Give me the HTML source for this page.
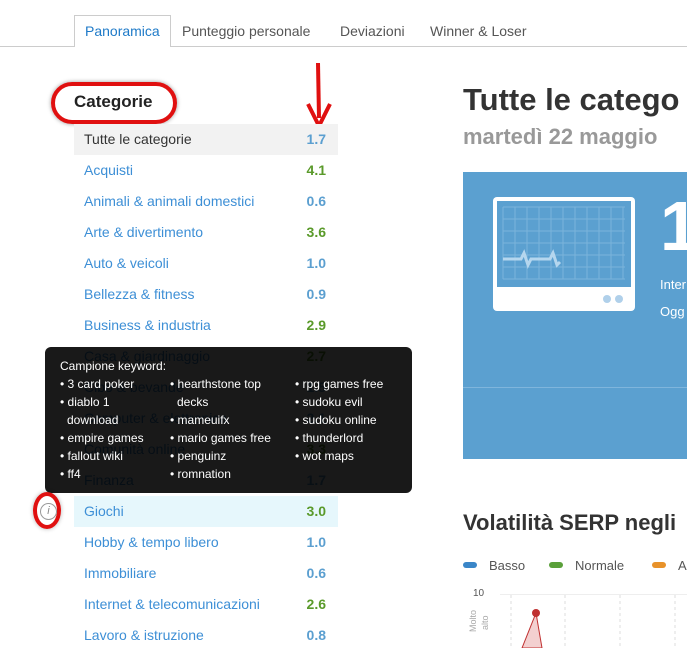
<!DOCTYPE html>
<html><head><meta charset="utf-8"><style>
*{margin:0;padding:0;box-sizing:border-box}
body{width:687px;height:648px;overflow:hidden;background:#fff;font-family:"Liberation Sans",sans-serif;position:relative;color:#333}
.a{position:absolute;white-space:nowrap}
.tab{font-size:14px;color:#555;top:23px}
.row{position:absolute;left:74px;width:264px;height:31px;font-size:14px;line-height:31px}
.row .l{position:absolute;left:10px;color:#3d8fd6}
.row .n{position:absolute;right:12px;font-weight:bold;color:#5b9fd0}
.row .g{color:#5a9a2a}
.tt{position:absolute;left:45px;top:347px;width:367px;height:146px;background:rgba(0,0,0,.9);border-radius:6px;color:#fff;font-size:12px}
.tt div{position:absolute;white-space:nowrap}
</style></head><body>
<div class="a" style="left:0;top:46px;width:687px;height:1px;background:#ccc"></div>
<div class="a" style="left:74px;top:15px;width:97px;height:32px;border:1px solid #ccc;border-bottom:none;background:#fff"></div>
<div class="a tab" style="left:85px;color:#1e7ac8">Panoramica</div>
<div class="a tab" style="left:182px">Punteggio personale</div>
<div class="a tab" style="left:340px">Deviazioni</div>
<div class="a tab" style="left:430px">Winner &amp; Loser</div>

<div class="a" style="left:74px;top:92px;font-size:17px;font-weight:bold;color:#222">Categorie</div>
<div class="a" style="left:51px;top:82px;width:126px;height:42px;border:4px solid #e01010;border-radius:22px;box-shadow:0 0 4px rgba(0,0,0,.4)"></div>
<svg class="a" style="left:304px;top:60px" width="30" height="72"><line x1="14" y1="3" x2="15" y2="58" stroke="#e01010" stroke-width="4"/><polyline points="4,44 15,66 26,44" fill="none" stroke="#e01010" stroke-width="4"/></svg>

<div class="row" style="top:124px;background:#f2f2f2"><span class="l" style="color:#333">Tutte le categorie</span><span class="n">1.7</span></div>
<div class="row" style="top:155px"><span class="l">Acquisti</span><span class="n g">4.1</span></div>
<div class="row" style="top:186px"><span class="l">Animali &amp; animali domestici</span><span class="n">0.6</span></div>
<div class="row" style="top:217px"><span class="l">Arte &amp; divertimento</span><span class="n g">3.6</span></div>
<div class="row" style="top:248px"><span class="l">Auto &amp; veicoli</span><span class="n">1.0</span></div>
<div class="row" style="top:279px"><span class="l">Bellezza &amp; fitness</span><span class="n">0.9</span></div>
<div class="row" style="top:310px"><span class="l">Business &amp; industria</span><span class="n g">2.9</span></div>
<div class="row" style="top:341px"><span class="l">Casa &amp; giardinaggio</span><span class="n g">2.7</span></div>
<div class="row" style="top:372px"><span class="l">Cibo &amp; bevande</span><span class="n">1.5</span></div>
<div class="row" style="top:403px"><span class="l">Computer &amp; elettronica</span><span class="n">2.1</span></div>
<div class="row" style="top:434px"><span class="l">Comunità online</span><span class="n g">3.3</span></div>
<div class="row" style="top:465px"><span class="l">Finanza</span><span class="n">1.7</span></div>
<div class="row" style="top:496px;background:#e6f7fc"><span class="l">Giochi</span><span class="n g">3.0</span></div>
<div class="row" style="top:527px"><span class="l">Hobby &amp; tempo libero</span><span class="n">1.0</span></div>
<div class="row" style="top:558px"><span class="l">Immobiliare</span><span class="n">0.6</span></div>
<div class="row" style="top:589px"><span class="l">Internet &amp; telecomunicazioni</span><span class="n g">2.6</span></div>
<div class="row" style="top:620px"><span class="l">Lavoro &amp; istruzione</span><span class="n">0.8</span></div>

<div class="tt">
<div style="left:15px;top:12px">Campione keyword:</div>
<div style="left:15px;top:30px">• 3 card poker</div>
<div style="left:15px;top:48px">• diablo 1</div>
<div style="left:22px;top:66px">download</div>
<div style="left:15px;top:84px">• empire games</div>
<div style="left:15px;top:102px">• fallout wiki</div>
<div style="left:15px;top:120px">• ff4</div>
<div style="left:125px;top:30px">• hearthstone top</div>
<div style="left:132px;top:48px">decks</div>
<div style="left:125px;top:66px">• mameuifx</div>
<div style="left:125px;top:84px">• mario games free</div>
<div style="left:125px;top:102px">• penguinz</div>
<div style="left:125px;top:120px">• romnation</div>
<div style="left:250px;top:30px">• rpg games free</div>
<div style="left:250px;top:48px">• sudoku evil</div>
<div style="left:250px;top:66px">• sudoku online</div>
<div style="left:250px;top:84px">• thunderlord</div>
<div style="left:250px;top:102px">• wot maps</div>
</div>
<div class="a" style="left:33px;top:492px;width:28px;height:37px;border:4px solid #e01010;border-radius:50%;box-shadow:0 0 4px rgba(0,0,0,.3)"></div>
<div class="a" style="left:40px;top:503px;width:17px;height:17px;border:1px solid #999;border-radius:50%;font-size:11px;color:#888;text-align:center;line-height:15px;font-style:italic;background:#fff">i</div>

<div class="a" style="left:463px;top:82px;font-size:31px;font-weight:bold;color:#333">Tutte le catego</div>
<div class="a" style="left:463px;top:124px;font-size:22px;font-weight:bold;color:#999">martedì 22 maggio</div>
<div class="a" style="left:463px;top:172px;width:224px;height:287px;background:#5ba0d0"></div>
<div class="a" style="left:463px;top:387px;width:224px;height:1px;background:#7fb5dc"></div>
<svg class="a" style="left:493px;top:197px" width="143" height="115">
<rect x="0" y="0" width="142" height="114" rx="4" fill="#fff"/>
<rect x="4" y="4" width="134" height="86" fill="#5ba0d0"/>
<g stroke="#7bb4db" stroke-width="1" fill="none">
<path d="M10 10h122M10 22h122M10 34h122M10 46h122M10 58h122M10 70h122M10 82h122"/>
<path d="M10 10v72M22 10v72M34 10v72M46 10v72M58 10v72M70 10v72M82 10v72M94 10v72M106 10v72M118 10v72M130 10v72"/>
</g>
<path d="M10 62h18l3-6 4 12 3-6h19l3-6 4 12 3-3" stroke="#b5d6ee" stroke-width="3" fill="none"/>
<circle cx="114" cy="102" r="4" fill="#b0d0ea"/><circle cx="126" cy="102" r="4" fill="#b0d0ea"/>
</svg>
<div class="a" style="left:660px;top:186px;font-size:70px;font-weight:bold;color:#fff">1</div>
<div class="a" style="left:660px;top:277px;font-size:13px;color:#fff">Inter</div>
<div class="a" style="left:660px;top:304px;font-size:13px;color:#fff">Ogg</div>

<div class="a" style="left:463px;top:510px;font-size:22px;font-weight:bold;color:#333">Volatilità SERP negli</div>
<div class="a" style="left:463px;top:562px;width:14px;height:6px;background:#3a86c8;border-radius:3px"></div>
<div class="a" style="left:489px;top:558px;font-size:13px;color:#555">Basso</div>
<div class="a" style="left:549px;top:562px;width:14px;height:6px;background:#5aa03a;border-radius:3px"></div>
<div class="a" style="left:575px;top:558px;font-size:13px;color:#555">Normale</div>
<div class="a" style="left:652px;top:562px;width:14px;height:6px;background:#e8922a;border-radius:3px"></div>
<div class="a" style="left:678px;top:558px;font-size:13px;color:#555">A</div>
<div class="a" style="left:473px;top:588px;font-size:10px;color:#555">10</div>
<div class="a" style="left:500px;top:594px;width:187px;height:1px;background:#eee"></div>
<div class="a" style="left:468px;top:632px;font-size:9px;color:#aaa;transform:rotate(-90deg);transform-origin:left top">Molto</div>
<div class="a" style="left:480px;top:630px;font-size:9px;color:#aaa;transform:rotate(-90deg);transform-origin:left top">alto</div>
<svg class="a" style="left:500px;top:595px" width="187" height="53"><path d="M11 0v53M65 0v53M120 0v53M175 0v53" stroke="#ddd" stroke-dasharray="3,3"/><path d="M22 53L36 18L42 53Z" fill="#f3d0d0" stroke="#c03030"/><circle cx="36" cy="18" r="4" fill="#c03030"/></svg>
</body></html>
